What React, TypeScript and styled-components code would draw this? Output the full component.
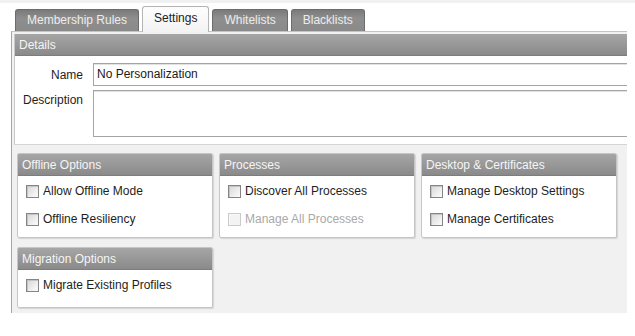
import styled, { createGlobalStyle } from "styled-components";

const GlobalStyle = createGlobalStyle`
  html, body {
    margin: 0;
    padding: 0;
    background: #fff;
  }
  body {
    font-family: "Liberation Sans", Arial, sans-serif;
    font-size: 12px;
    color: #1e1e1e;
  }
`;

const Page = styled.div`
  width: 635px;
  height: 336px;
  overflow: hidden;
  border-top: 3px solid #f1f1f1;
  box-sizing: border-box;
`;

const TabBar = styled.div`
  display: flex;
  align-items: flex-end;
  gap: 3px;
  height: 28px;
  padding-left: 15px;
`;

const Tab = styled.div<{ $active?: boolean }>`
  box-sizing: border-box;
  height: ${(p) => (p.$active ? "26px" : "22px")};
  padding: 0 11px;
  display: flex;
  align-items: center;
  border: 1px solid ${(p) => (p.$active ? "#b4b4b4" : "#6c6c6c")};
  border-bottom: none;
  border-radius: 3px 3px 0 0;
  background: ${(p) =>
    p.$active
      ? "linear-gradient(#fdfdfd, #f3f3f3)"
      : "linear-gradient(#7a7a7a, #8e8e8e 40%, #8a8a8a)"};
  color: ${(p) => (p.$active ? "#222" : "#ececec")};
  margin-bottom: ${(p) => (p.$active ? "-1px" : "0")};
  position: relative;
  z-index: ${(p) => (p.$active ? 1 : 0)};
  padding-bottom: ${(p) => (p.$active ? "3px" : "1px")};
`;

const Panel = styled.div`
  margin-left: 11px;
  width: 616px;
  box-sizing: border-box;
  border-top: 1px solid #c4c4c4;
  border-left: 1px solid #a6a6a6;
  background: #f1f1f1;
  padding: 2px 0 5px 2px;
`;

const Header = styled.div`
  height: 22px;
  box-sizing: border-box;
  display: flex;
  align-items: center;
  padding-left: 4px;
  background: linear-gradient(#a6a6a6, #8a8a8a);
  border-bottom: 1px solid #7d7d7d;
  color: #f5f5f5;
  white-space: nowrap;
`;

const DetailsBox = styled.div`
  background: #fff;
  border-left: 1px solid #c8c8c8;
  border-bottom: 1px solid #d6d6d6;
`;

const FormGrid = styled.div`
  display: grid;
  grid-template-columns: 62px 1fr;
  column-gap: 10px;
  row-gap: 4px;
  padding: 7px 0 7px 6px;
`;

const Label = styled.div<{ $top?: boolean }>`
  text-align: right;
  align-self: ${(p) => (p.$top ? "start" : "center")};
  padding-top: ${(p) => (p.$top ? "3px" : "0")};
  white-space: nowrap;
`;

const Field = styled.div<{ $tall?: boolean }>`
  height: ${(p) => (p.$tall ? "47px" : "23px")};
  box-sizing: border-box;
  border: 1px solid #a4a4a4;
  border-right: none;
  box-shadow: inset 0 1px 0 #e2e2e2;
  padding: 3px 3px 0;
  background: #fff;
  color: #1a1a1a;
`;

const Groups = styled.div`
  display: grid;
  grid-template-columns: 196px 196px 196px;
  column-gap: 6px;
  row-gap: 9px;
  padding: 8px 0 0 3px;
`;

const Group = styled.div`
  background: #fff;
  border: 1px solid #c6c6c6;
  border-radius: 2px;
  box-shadow: 1px 1px 1px rgba(0, 0, 0, 0.12);
  overflow: hidden;
`;

const GroupBody = styled.div<{ $bottom?: number }>`
  padding: 1px 0 ${(p) => p.$bottom ?? 4}px 8px;
`;

const Row = styled.label<{ $disabled?: boolean }>`
  display: flex;
  align-items: center;
  gap: 4px;
  height: 28px;
  color: ${(p) => (p.$disabled ? "#a9a9a9" : "#1e1e1e")};
  white-space: nowrap;
`;

const Box = styled.span<{ $disabled?: boolean }>`
  width: 13px;
  height: 13px;
  box-sizing: border-box;
  border: 1px solid ${(p) => (p.$disabled ? "#cbcbcb" : "#858585")};
  background: ${(p) =>
    p.$disabled
      ? "#f3f3f3"
      : "linear-gradient(135deg, #d6d6d6, #f2f2f2 70%, #fbfbfb)"};
  box-shadow: inset 1px 1px 0 ${(p) => (p.$disabled ? "#f8f8f8" : "#c4c4c4")};
  flex-shrink: 0;
`;

function Check({ label, disabled }: { label: string; disabled?: boolean }) {
  return (
    <Row $disabled={disabled}>
      <Box $disabled={disabled} />
      {label}
    </Row>
  );
}

export default function App() {
  return (
    <Page>
      <GlobalStyle />
      <TabBar>
        <Tab>Membership Rules</Tab>
        <Tab $active>Settings</Tab>
        <Tab>Whitelists</Tab>
        <Tab>Blacklists</Tab>
      </TabBar>
      <Panel>
        <DetailsBox>
          <Header>Details</Header>
          <FormGrid>
            <Label>Name</Label>
            <Field>No Personalization</Field>
            <Label $top>Description</Label>
            <Field $tall />
          </FormGrid>
        </DetailsBox>
        <Groups>
          <Group>
            <Header>Offline Options</Header>
            <GroupBody>
              <Check label="Allow Offline Mode" />
              <Check label="Offline Resiliency" />
            </GroupBody>
          </Group>
          <Group>
            <Header>Processes</Header>
            <GroupBody>
              <Check label="Discover All Processes" />
              <Check label="Manage All Processes" disabled />
            </GroupBody>
          </Group>
          <Group>
            <Header>Desktop &amp; Certificates</Header>
            <GroupBody>
              <Check label="Manage Desktop Settings" />
              <Check label="Manage Certificates" />
            </GroupBody>
          </Group>
          <Group>
            <Header>Migration Options</Header>
            <GroupBody $bottom={8}>
              <Check label="Migrate Existing Profiles" />
            </GroupBody>
          </Group>
        </Groups>
      </Panel>
    </Page>
  );
}
